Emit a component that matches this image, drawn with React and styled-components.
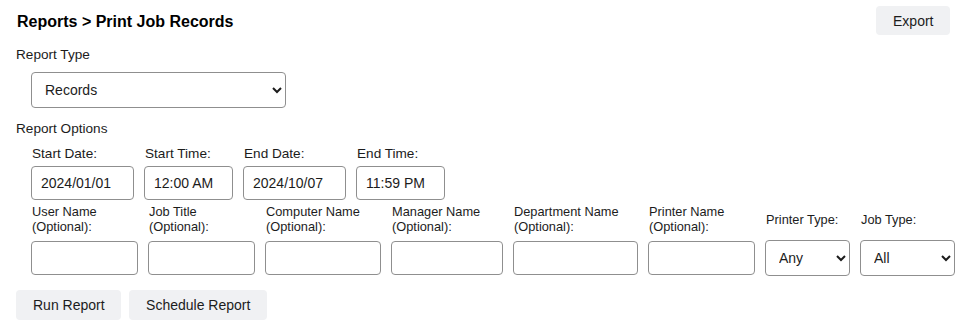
import React from 'react';
import styled, { createGlobalStyle } from 'styled-components';

const GlobalStyle = createGlobalStyle`
    body {
        margin: 0;
        background: #ffffff;
        font-family: 'Liberation Sans', Arial, sans-serif;
        color: #1c1c1c;
    }
`

const dateFields = [
    { label: 'Start Date:', value: '2024/01/01', width: 103 },
    { label: 'Start Time:', value: '12:00 AM', width: 89 },
    { label: 'End Date:', value: '2024/10/07', width: 103 },
    { label: 'End Time:', value: '11:59 PM', width: 89 },
];

const filterFields = [
    { label: ['User Name', '(Optional):'], width: 107 },
    { label: ['Job Title', '(Optional):'], width: 107 },
    { label: ['Computer Name', '(Optional):'], width: 116 },
    { label: ['Manager Name', '(Optional):'], width: 112 },
    { label: ['Department Name', '(Optional):'], width: 125 },
    { label: ['Printer Name', '(Optional):'], width: 107 },
    { label: ['Printer Type:'], width: 85, options: ['Any', 'Color', 'Mono'] },
    { label: ['Job Type:'], width: 95, options: ['All', 'Print', 'Copy', 'Scan'] },
];

export default function App() {
    return (
        <Page>
            <GlobalStyle />
            <Header>
                <Title>Reports &gt; Print Job Records</Title>
                <Button>Export</Button>
            </Header>

            <SectionLabel $top={12}>Report Type</SectionLabel>
            <Indent>
                <Select $width={255} defaultValue="Records">
                    <option>Records</option>
                    <option>Summary</option>
                </Select>
            </Indent>

            <SectionLabel $top={13}>Report Options</SectionLabel>
            <Indent>
                <FieldRow $top={7}>
                    {dateFields.map((f) => (
                        <Field key={f.label}>
                            <FieldLabel>{f.label}</FieldLabel>
                            <Input $width={f.width} defaultValue={f.value} />
                        </Field>
                    ))}
                </FieldRow>
                <FieldRow $top={5}>
                    {filterFields.map((f) => (
                        <Field key={f.label[0]}>
                            <TwoLineLabel>
                                {f.label.map((line) => <span key={line}>{line}</span>)}
                            </TwoLineLabel>
                            <ControlSlot>
                                {f.options ? (
                                    <Select $width={f.width} defaultValue={f.options[0]}>
                                        {f.options.map((o) => <option key={o}>{o}</option>)}
                                    </Select>
                                ) : (
                                    <Input $width={f.width} />
                                )}
                            </ControlSlot>
                        </Field>
                    ))}
                </FieldRow>
            </Indent>

            <Actions>
                <Button $tall>Run Report</Button>
                <Button $tall>Schedule Report</Button>
            </Actions>
        </Page>
    )
}

const Page = styled.div`
    width: 960px;
    height: 323px;
    box-sizing: border-box;
    padding: 6px 10px 0 16px;
    overflow: hidden;
`

const Header = styled.div`
    display: flex;
    justify-content: space-between;
    align-items: flex-start;
    height: 29px;
`

const Title = styled.h1`
    margin: 0;
    padding-top: 6px;
    padding-left: 1px;
    font-size: 16px;
    line-height: 20px;
    font-weight: bold;
    color: #000000;
`

const Button = styled.button`
    height: ${(p) => (p.$tall ? '30px' : '29px')};
    padding: 0 16.5px 0 17px;
    border: none;
    border-radius: 4px;
    background: #f0f1f3;
    font-family: 'Liberation Sans', Arial, sans-serif;
    font-size: 14px;
    color: #1c1c1c;
    cursor: pointer;
`

const SectionLabel = styled.div`
    margin-top: ${(p) => p.$top}px;
    font-size: 13.6px;
    line-height: 16px;
`

const Indent = styled.div`
    padding-left: 15px;
    margin-top: 9px;
`

const FieldRow = styled.div`
    display: flex;
    gap: 10px;
    margin-top: ${(p) => p.$top}px;
    &:first-child {
        margin-top: 0;
    }
`

const Field = styled.div`
    display: flex;
    flex-direction: column;
`

const FieldLabel = styled.label`
    font-size: 13.6px;
    line-height: 16px;
    padding-left: 1px;
    margin-bottom: 4px;
`

const TwoLineLabel = styled.label`
    display: flex;
    flex-direction: column;
    justify-content: center;
    height: 30px;
    padding-left: 1px;
    font-size: 12.8px;
    line-height: 14.8px;
    margin-bottom: 5px;
`

const ControlSlot = styled.div`
    display: flex;
    align-items: center;
    height: 36px;
`

const Input = styled.input`
    box-sizing: border-box;
    width: ${(p) => p.$width}px;
    height: 34px;
    padding: 0 9px;
    border: 1px solid #8f8f8f;
    border-radius: 4px;
    font-family: 'Liberation Sans', Arial, sans-serif;
    font-size: 14px;
    color: #1c1c1c;
    background: #ffffff;
`

const Select = styled.select`
    box-sizing: border-box;
    width: ${(p) => p.$width}px;
    height: 36px;
    padding: 0 6px 0 9px;
    border: 1px solid #8f8f8f;
    border-radius: 4px;
    font-family: 'Liberation Sans', Arial, sans-serif;
    font-size: 14px;
    color: #1c1c1c;
    background: #ffffff;
`

const Actions = styled.div`
    display: flex;
    gap: 8px;
    margin-top: 14px;
`
